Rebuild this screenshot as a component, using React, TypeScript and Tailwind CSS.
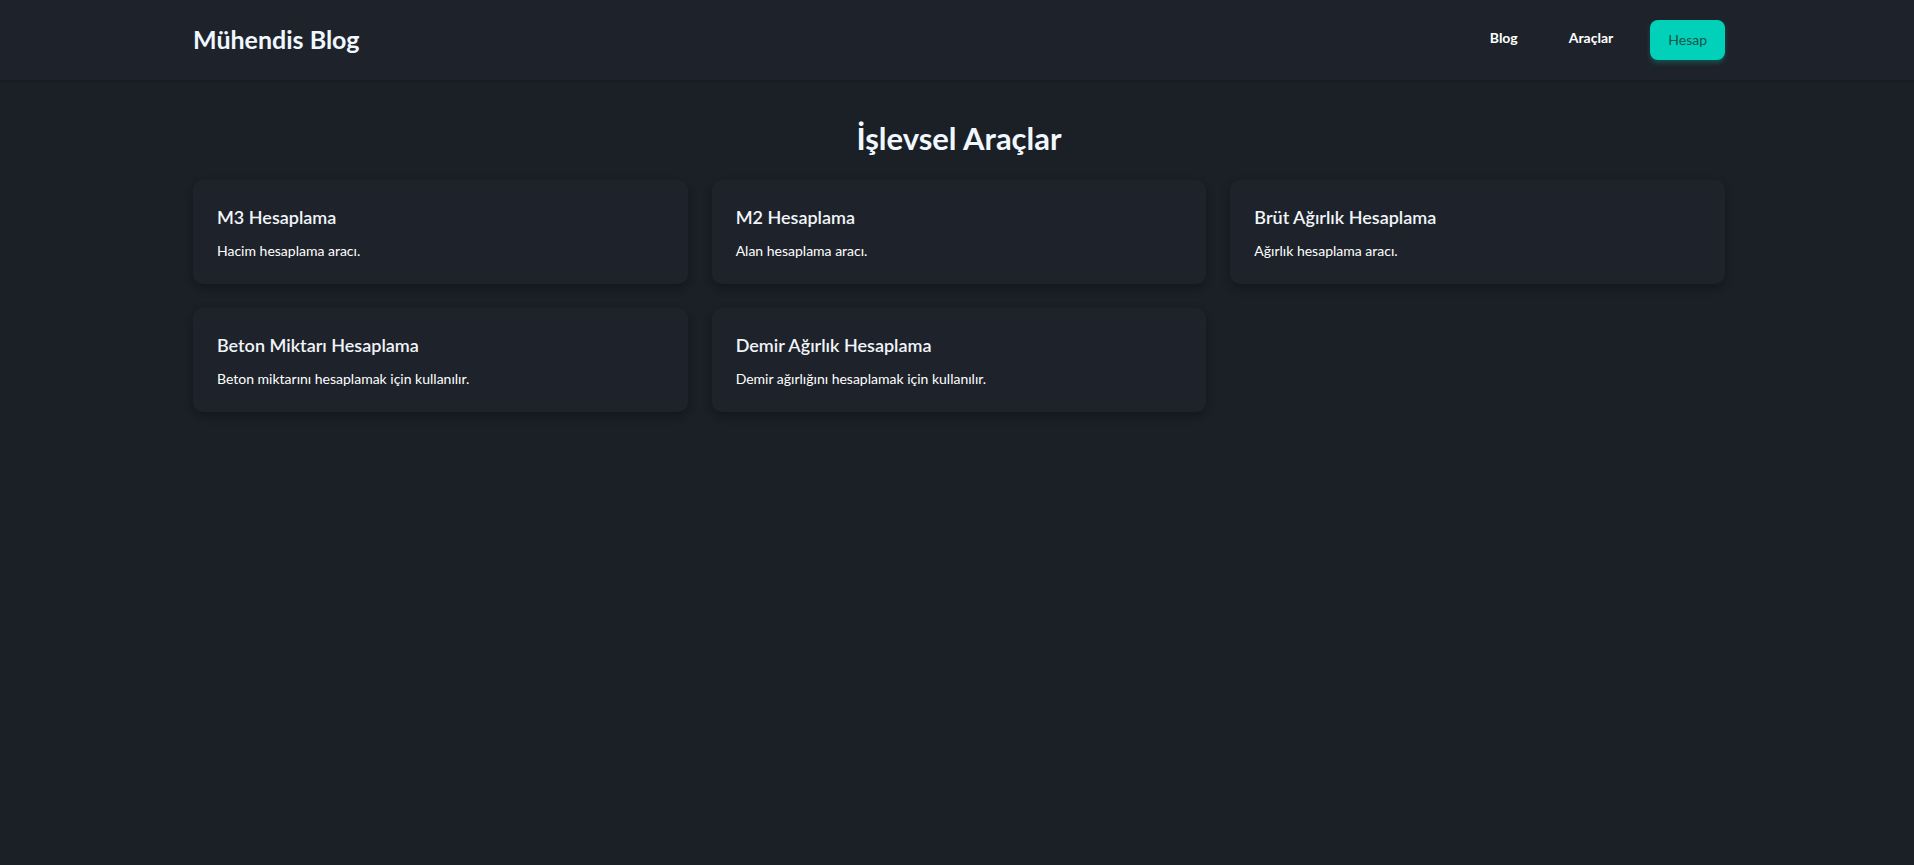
const tools = [
  {title: "M3 Hesaplama", desc: "Hacim hesaplama aracı."},
  {title: "M2 Hesaplama", desc: "Alan hesaplama aracı."},
  {title: "Brüt Ağırlık Hesaplama", desc: "Ağırlık hesaplama aracı."},
  {title: "Beton Miktarı Hesaplama", desc: "Beton miktarını hesaplamak için kullanılır."},
  {title: "Demir Ağırlık Hesaplama", desc: "Demir ağırlığını hesaplamak için kullanılır."},
];

const ToolCard = ({title, desc}: {title: string, desc: string}) => {
  return (
    <div className="h-[104px] rounded-[10px] bg-[#1e232b] px-6 pt-[23px] shadow-[0_4px_10px_rgba(0,0,0,0.25)]">
      <h3 className="mb-[10px] text-lg leading-7 font-semibold text-[#f1f5f9]">{title}</h3>
      <p className="text-sm leading-5 text-white">{desc}</p>
    </div>
  )
}

export default function App() {
  return (
    <div className="min-h-screen bg-[#1b1f26] font-['Segoe_UI','Lato',sans-serif] text-white">
      <header className="h-20 bg-[#1e232b] shadow-[0_1px_3px_rgba(0,0,0,0.2)]">
        <div className="mx-auto flex h-full w-[1536px] items-center justify-between pl-1">
          <a href="#" className="text-[25px] font-bold text-[#f0f7ff]">Mühendis Blog</a>
          <nav className="flex items-center">
            <a href="#" className="mb-1 text-sm font-bold text-white">Blog</a>
            <a href="#" className="mb-1 ml-[51px] text-sm font-bold text-white">Araçlar</a>
            <button
              className="ml-[37px] h-10 rounded-lg bg-[#00d1b8] px-[18px] text-sm text-[#1a524e] shadow-[0_3px_4px_rgba(0,209,184,0.25)]">
              Hesap
            </button>
          </nav>
        </div>
      </header>
      <main className="mx-auto w-[1536px] pl-1">
        <h1 className="mt-10 mb-6 text-center text-[31px] leading-9 font-bold text-[#f0f7ff]">İşlevsel Araçlar</h1>
        <div className="grid grid-cols-3 gap-6">
          {tools.map((t) => (
            <ToolCard key={t.title} title={t.title} desc={t.desc} />
          ))}
        </div>
      </main>
    </div>
  )
}
